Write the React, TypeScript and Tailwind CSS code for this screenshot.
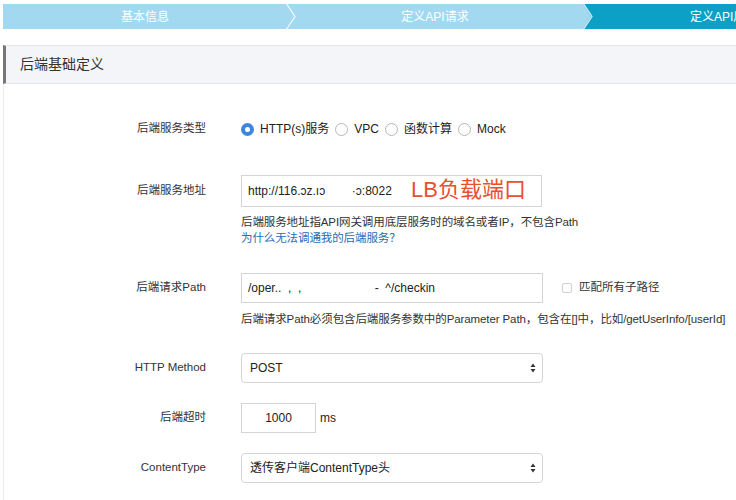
import { ReactNode } from 'react';

const font = { fontFamily: '"Liberation Sans", "Noto Sans CJK SC", sans-serif' };

function Row({ label, children, className = '' }: { label: string; children: ReactNode; className?: string }) {
  return (
    <div className={`flex ${className}`}>
      <div className="w-[202px] shrink-0 text-right text-[11.5px] text-[#333] flex items-center justify-end h-full">{label}</div>
      <div className="ml-[35px] flex items-center">{children}</div>
    </div>
  );
}

function Radio({ checked, label }: { checked?: boolean; label: string }) {
  return (
    <label className="flex items-center gap-[6px] mr-[6px]">
      {checked ? (
        <span className="w-[13px] h-[13px] rounded-full bg-[#3d86e0] flex items-center justify-center">
          <span className="w-[5px] h-[5px] rounded-full bg-white" />
        </span>
      ) : (
        <span className="w-[13px] h-[13px] rounded-full border border-[#b8b8b8] bg-white" />
      )}
      <span className="text-[12px] text-[#222]">{label}</span>
    </label>
  );
}

function SelectArrows() {
  return (
    <svg width="6" height="10" viewBox="0 0 6 10" className="absolute right-[6px] top-1/2 -translate-y-1/2">
      <path d="M3 0.5 L5.5 4 H0.5 Z" fill="#333" />
      <path d="M3 9.5 L5.5 6 H0.5 Z" fill="#333" />
    </svg>
  );
}

export default function App() {
  return (
    <div className="w-[736px] h-[500px] bg-white overflow-hidden" style={font}>
      {/* steps */}
      <div className="relative flex h-[25px] mt-[4px] ml-[3px] text-[12px] text-white">
        <div className="w-[284px] shrink-0 bg-[#a2d9f1] flex items-center justify-center">基本信息</div>
        <div className="w-[296px] shrink-0 bg-[#a2d9f1] flex items-center justify-center">定义API请求</div>
        <div className="flex-1 min-w-0 overflow-hidden bg-[#0ca0c7] flex items-center pl-[107px] whitespace-nowrap">定义API后端服务</div>
        <svg className="absolute left-0 top-0" width="733" height="25" viewBox="0 0 733 25">
          <polyline points="283,-1 292,12.5 283,26" fill="none" stroke="#ffffff" strokeWidth="1.2" opacity="0.85" />
          <polygon points="580,0 588,12.5 580,25" fill="#a2d9f1" />
          <polyline points="580,-1 589,12.5 580,26" fill="none" stroke="#ffffff" strokeWidth="1.2" opacity="0.85" />
        </svg>
      </div>

      {/* section header */}
      <div className="mt-[16px] ml-[3px] h-[39px] bg-[#f4f5f8] border-y border-[#e3e4e8] border-l-[3px] border-l-[#777] flex items-center pl-[14px] text-[14px] text-[#333]">
        后端基础定义
      </div>

      <div className="ml-[3px] border-l border-[#ececec] h-[420px]">
        <Row label="后端服务类型" className="pt-[33px] h-[57px]">
          <Radio checked label="HTTP(s)服务" />
          <Radio label="VPC" />
          <Radio label="函数计算" />
          <Radio label="Mock" />
        </Row>

        <Row label="后端服务地址" className="mt-[34px] h-[32px]">
          <div className="relative w-[301px] h-[32px] border border-[#d4d4d4] flex items-center pl-[6px] text-[12px] text-[#222]">
            http://116.ɔz.ıɔ&nbsp;&nbsp;&nbsp;&nbsp;&nbsp;&nbsp;&nbsp;&nbsp;·ɔ:8022
            <span className="absolute left-[169px] top-[0px] text-[22px] leading-[28px] text-[#e9502e]">LB负载端口</span>
          </div>
        </Row>
        <div className="ml-[237px] mt-[7px] text-[11.5px] leading-[16px] text-[#333] tracking-[-0.1px]">
          <div>后端服务地址指API网关调用底层服务时的域名或者IP，不包含Path</div>
          <div className="text-[#2b6db4]">为什么无法调通我的后端服务？</div>
        </div>

        <Row label="后端请求Path" className="mt-[27px] h-[30px]">
          <div className="w-[302px] h-[30px] border border-[#d4d4d4] flex items-center pl-[6px] text-[12px] text-[#222] whitespace-pre">
            {'/oper..  ,  ,                      -  ^/checkin'}
          </div>
          <span className="ml-[19px] w-[10px] h-[10px] border border-[#d0d0d0] rounded-[2px]" />
          <span className="ml-[7px] text-[11.5px] text-[#333]">匹配所有子路径</span>
        </Row>
        <div className="ml-[237px] mt-[8px] text-[11.5px] leading-[16px] text-[#333] whitespace-nowrap tracking-[-0.1px]">
          后端请求Path必须包含后端服务参数中的Parameter Path，包含在[]中，比如/getUserInfo/[userId]
        </div>

        <Row label="HTTP Method" className="mt-[26px] h-[30px]">
          <div className="relative w-[302px] h-[30px] border border-[#d4d4d4] rounded-[4px] flex items-center pl-[8px] text-[12px] text-[#222]">
            POST
            <SelectArrows />
          </div>
        </Row>

        <Row label="后端超时" className="mt-[20px] h-[30px]">
          <div className="w-[75px] h-[30px] border border-[#d4d4d4] flex items-center justify-center text-[12px] text-[#222]">1000</div>
          <span className="ml-[4px] text-[12px] text-[#222]">ms</span>
        </Row>

        <Row label="ContentType" className="mt-[20px] h-[30px]">
          <div className="relative w-[302px] h-[30px] border border-[#d4d4d4] rounded-[4px] flex items-center pl-[8px] text-[12px] text-[#222]">
            透传客户端ContentType头
            <SelectArrows />
          </div>
        </Row>
      </div>
    </div>
  );
}
